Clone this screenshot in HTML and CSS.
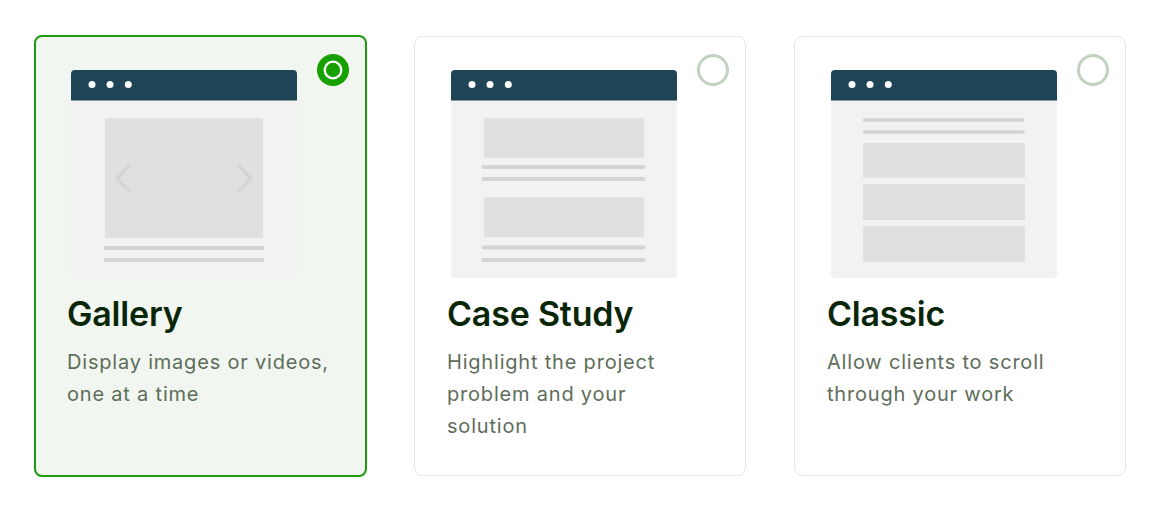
FILE: index.html
```html
<!DOCTYPE html>
<html lang="en">
<head>
<meta charset="utf-8">
<title>Project layouts</title>
<link rel="stylesheet" href="styles.css">
</head>
<body>
<div class="options">
  <div class="card selected">
    <svg class="radio" width="32" height="32" viewBox="0 0 32 32"><circle cx="16" cy="16" r="16" fill="#17a000"/><circle cx="16" cy="16" r="8.3" fill="none" stroke="#fff" stroke-width="2.3"/></svg>
    <svg class="shot" width="226" height="208" viewBox="0 0 226 208">
      <rect x="0" y="0" width="226" height="208" rx="4" fill="#f2f2f2"/>
      <path d="M0 4 Q0 0 4 0 H222 Q226 0 226 4 V30.5 H0 Z" fill="#1f4456"/>
      <circle cx="21" cy="14.5" r="3.5" fill="#fff"/><circle cx="39" cy="14.5" r="3.5" fill="#fff"/><circle cx="57.3" cy="14.5" r="3.5" fill="#fff"/>
      <rect x="34" y="48" width="158" height="120" fill="#e0e0e0"/>
      <polyline points="58.5,95.5 46,108.5 58.5,121" fill="none" stroke="#d3d3d3" stroke-width="3" stroke-linecap="round" stroke-linejoin="round"/>
      <polyline points="167.5,95.5 180,108.5 167.5,121" fill="none" stroke="#d3d3d3" stroke-width="3" stroke-linecap="round" stroke-linejoin="round"/>
      <line x1="34.5" y1="178" x2="191.5" y2="178" stroke="#d4d4d4" stroke-width="4" stroke-linecap="round"/>
      <line x1="34.5" y1="190" x2="191.5" y2="190" stroke="#d4d4d4" stroke-width="4" stroke-linecap="round"/>
    </svg>
    <h2 class="title">Gallery</h2>
    <p class="desc">Display images or videos, one at a time</p>
  </div>
  <div class="card">
    <svg class="radio" width="32" height="32" viewBox="0 0 32 32"><circle cx="16" cy="16" r="14.5" fill="#fff" stroke="#c1d2c1" stroke-width="3"/></svg>
    <svg class="shot" width="226" height="208" viewBox="0 0 226 208">
      <rect x="0" y="0" width="226" height="208" rx="4" fill="#f2f2f2"/>
      <path d="M0 4 Q0 0 4 0 H222 Q226 0 226 4 V30.5 H0 Z" fill="#1f4456"/>
      <circle cx="21" cy="14.5" r="3.5" fill="#fff"/><circle cx="39" cy="14.5" r="3.5" fill="#fff"/><circle cx="57.3" cy="14.5" r="3.5" fill="#fff"/>
      <rect x="33" y="48" width="160" height="40" fill="#e0e0e0"/>
      <line x1="32.5" y1="97" x2="192.5" y2="97" stroke="#d4d4d4" stroke-width="4" stroke-linecap="round"/>
      <line x1="32.5" y1="109" x2="192.5" y2="109" stroke="#d4d4d4" stroke-width="4" stroke-linecap="round"/>
      <rect x="33" y="127" width="160" height="40" fill="#e0e0e0"/>
      <line x1="32.5" y1="177.5" x2="192.5" y2="177.5" stroke="#d4d4d4" stroke-width="4" stroke-linecap="round"/>
      <line x1="32.5" y1="190" x2="192.5" y2="190" stroke="#d4d4d4" stroke-width="4" stroke-linecap="round"/>
    </svg>
    <h2 class="title">Case Study</h2>
    <p class="desc">Highlight the project problem and your solution</p>
  </div>
  <div class="card">
    <svg class="radio" width="32" height="32" viewBox="0 0 32 32"><circle cx="16" cy="16" r="14.5" fill="#fff" stroke="#c1d2c1" stroke-width="3"/></svg>
    <svg class="shot" width="226" height="208" viewBox="0 0 226 208">
      <rect x="0" y="0" width="226" height="208" rx="4" fill="#f2f2f2"/>
      <path d="M0 4 Q0 0 4 0 H222 Q226 0 226 4 V30.5 H0 Z" fill="#1f4456"/>
      <circle cx="21" cy="14.5" r="3.5" fill="#fff"/><circle cx="39" cy="14.5" r="3.5" fill="#fff"/><circle cx="57.3" cy="14.5" r="3.5" fill="#fff"/>
      <line x1="33.5" y1="50" x2="192" y2="50" stroke="#d4d4d4" stroke-width="3.5" stroke-linecap="round"/>
      <line x1="33.5" y1="62" x2="192" y2="62" stroke="#d4d4d4" stroke-width="3.5" stroke-linecap="round"/>
      <rect x="32" y="73" width="162" height="35" fill="#e0e0e0"/>
      <rect x="32" y="114" width="162" height="36" fill="#e0e0e0"/>
      <rect x="32" y="156" width="162" height="36" fill="#e0e0e0"/>
    </svg>
    <h2 class="title">Classic</h2>
    <p class="desc">Allow clients to scroll through your work</p>
  </div>
</div>
</body>
</html>
```

FILE: styles.css
```css
html, body {
  margin: 0;
  padding: 0;
  background: #ffffff;
}

body {
  font-family: Inter, "Open Sans", "Liberation Sans", sans-serif;
}

.options {
  display: flex;
  align-items: flex-start;
  gap: 48px;
  padding: 36px 0 0 34px;
}

.card {
  position: relative;
  flex: none;
  box-sizing: border-box;
  width: 332px;
  height: 440px;
  border: 1px solid #e2e7e2;
  border-radius: 8px;
  padding: 33px 32px 0 32px;
  background: #ffffff;
}

.card.selected {
  width: 333px;
  height: 442px;
  margin: -1px -1px 0 0;
  border: 2px solid #1f9a12;
  background: #f1f6f0;
  padding: 33px 31px 0 31px;
}

.radio {
  position: absolute;
  top: 17px;
  right: 16px;
  display: block;
}

.card.selected .radio {
  top: 17px;
  right: 16px;
}

.shot {
  display: block;
  margin-left: 4px;
}

.title {
  margin: 16px 0 0 0;
  font-size: 34px;
  line-height: 40px;
  font-weight: 600;
  color: #0a2609;
  letter-spacing: -0.2px;
}

.desc {
  margin: 12px 0 0 0;
  font-size: 20px;
  line-height: 32px;
  letter-spacing: 0.8px;
  color: #5e6d5a;
  max-width: 265px;
}
```
